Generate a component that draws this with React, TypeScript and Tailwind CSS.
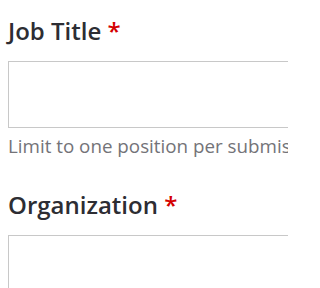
import * as React from 'react';

function Field({ label, hint }: { label: string; hint?: string }) {
  return (
    <div className="mb-[30px]">
      <label className="block text-[24px] font-semibold leading-[32px] text-[#2d2d33] mb-[14px]">
        {label} <span className="text-[#d40000]">*</span>
      </label>
      <input
        type="text"
        className="block w-[400px] h-[67px] border border-[#c8c8c8] bg-white px-3"
      />
      {hint && (
        <p className="mt-[5px] text-[18.8px] leading-[26px] text-[#737378] whitespace-nowrap">{hint}</p>
      )}
    </div>
  );
}

export default function App() {
  return (
    <div
      className="w-[288px] h-[288px] overflow-hidden bg-white pl-[8px] pt-[15px]"
      style={{ fontFamily: '"Open Sans", sans-serif' }}
    >
      <Field label="Job Title" hint="Limit to one position per submission." />
      <Field label="Organization" />
    </div>
  );
}
